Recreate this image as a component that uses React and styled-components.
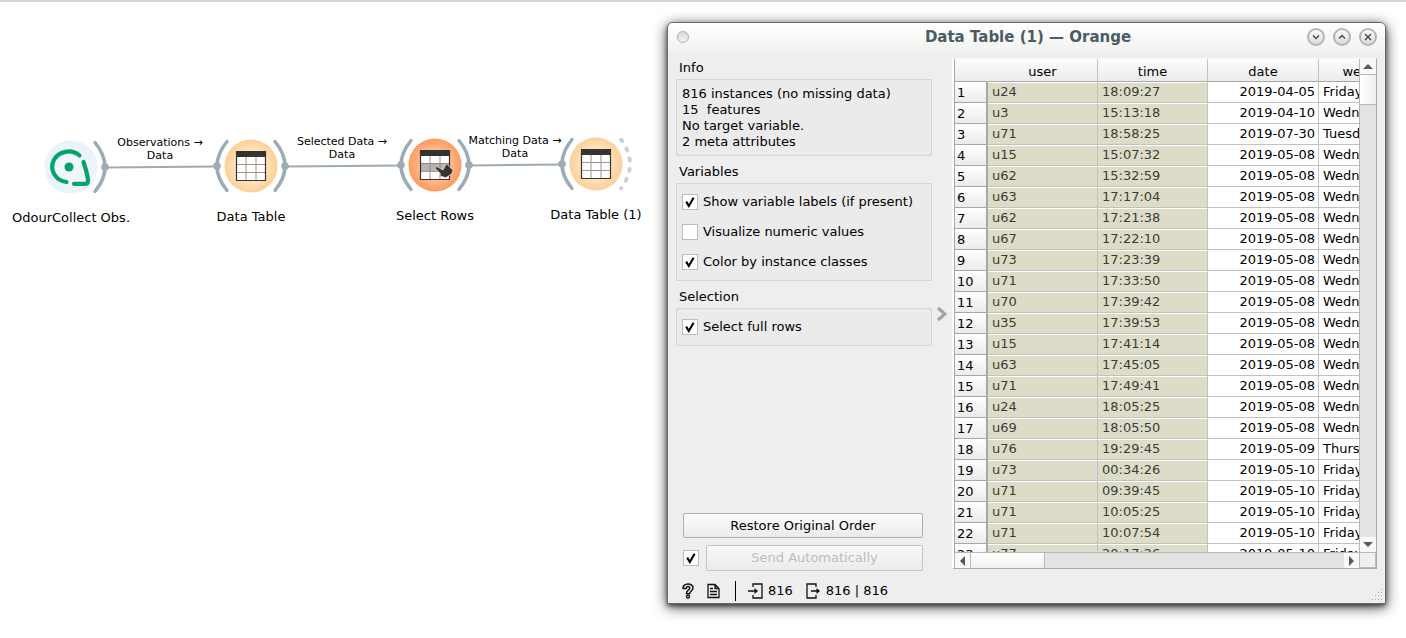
import React from 'react';
import styled, { createGlobalStyle } from 'styled-components';

const Global = createGlobalStyle`
  * { box-sizing: border-box; }
  body { margin: 0; background: #fff; }
  body, button, input, table { font: 13px/16px "DejaVu Sans", sans-serif; color: #000; }
`;

const Page = styled.main`
  display: flex;
  min-height: 100vh;
  height: 100vh;
  border-top: 2px solid #d4d4d4;
  overflow: hidden;
`;

/* ---------- workflow canvas ---------- */
const Canvas = styled.section`
  position: relative;
  flex: 1 1 0;
  min-width: 0;
`;
const Links = styled.svg`
  position: absolute;
  left: 0;
  top: 0;
  width: 660px;
  height: 240px;
`;
const Node = styled.div`
  position: absolute;
  left: ${p => p.$x - 80}px;
  top: ${p => p.$y - 30}px;
  width: 160px;
  display: flex;
  flex-direction: column;
  align-items: center;
  gap: 13px;
`;
const NodeIcon = styled.svg`
  width: 80px;
  height: 60px;
  overflow: visible;
`;
const LinkLabel = styled.div`
  position: absolute;
  left: ${p => p.$x - 60}px;
  top: ${p => p.$y}px;
  width: 120px;
  font-size: 11px;
  line-height: 13px;
  text-align: center;
`;

/* ---------- window ---------- */
const Window = styled.section`
  flex: 0 1 719px;
  min-width: 0;
  display: flex;
  flex-direction: column;
  margin: 20px 20px 34px 0;
  border: 1px solid #6a6a6a;
  border-radius: 6px 6px 0 0;
  background: #eee;
  box-shadow: 0 3px 14px rgba(0, 0, 0, 0.75), 0 2px 4px rgba(0, 0, 0, 0.5);
`;
const TitleBar = styled.header`
  display: flex;
  align-items: center;
  height: 28px;
  padding: 0 8px 0 9px;
  border-radius: 5px 5px 0 0;
  background: linear-gradient(#fff, #f3f2f1);
`;
const Title = styled.h1`
  flex: 1;
  margin: 0;
  padding-left: 60px;
  font-size: 15px;
  line-height: 20px;
  text-align: center;
  color: #4a5c66;
`;
const MenuDot = styled.button`
  width: 12px;
  height: 12px;
  padding: 0;
  border: 1px solid #b0b0b0;
  border-radius: 50%;
  background: linear-gradient(#d8d8d8, #f2f2f2);
`;
const WindowButtons = styled.div`
  display: flex;
  gap: 8px;
`;
const RoundButton = styled.button`
  display: grid;
  place-items: center;
  width: 18px;
  height: 18px;
  padding: 0;
  border: 2px solid #b4b4b4;
  border-radius: 50%;
  background: linear-gradient(#fafafa, #dcdcdc);
`;
const Body = styled.div`
  flex: 1;
  min-height: 0;
  display: flex;
  padding: 6px 8px 0;
`;
const Sidebar = styled.aside`
  flex: 0 0 256px;
  display: flex;
  flex-direction: column;
`;
const GroupTitle = styled.h2`
  margin: 0;
  padding: 3px;
  font-size: 13px;
  line-height: 16px;
  font-weight: 400;
`;
const Group = styled.div`
  margin-bottom: 5px;
  padding: ${p => p.$pad};
  border: 1px solid #d2d2d2;
  border-radius: 2px;
  background: #ebebeb;
`;
const InfoLine = styled.p`
  margin: 0;
  white-space: pre;
`;
const CheckLabel = styled.label`
  display: flex;
  align-items: center;
  gap: 5px;
  height: 30px;
`;
const Check = styled.input`
  appearance: none;
  flex: none;
  width: 16px;
  height: 16px;
  margin: 0;
  border: 1px solid #bcbcbc;
  background: #fff;
  &:checked {
    background: #fff url("data:image/svg+xml,%3Csvg xmlns='http://www.w3.org/2000/svg' viewBox='0 0 14 14'%3E%3Cpath d='M3.2 6.6 5.8 11 10.6 2.8' fill='none' stroke='%23000' stroke-width='2.1'/%3E%3C/svg%3E") center / 14px 14px no-repeat;
  }
`;
const Actions = styled.div`
  display: grid;
  grid-template-columns: 16px 1fr;
  gap: 7px;
  align-items: center;
  margin-top: auto;
  padding: 0 9px 0 7px;
`;
const Button = styled.button`
  grid-column: ${p => (p.$wide ? '1 / -1' : 'auto')};
  height: ${p => (p.$wide ? 25 : 26)}px;
  padding: 0;
  border: 1px solid #aeaeae;
  border-radius: 2px;
  background: linear-gradient(#fdfdfd, #ebebeb);
  &:disabled { color: #bdbdbd; border-color: #c4c4c4; background: linear-gradient(#f8f8f8, #ebebeb); }
`;
const Splitter = styled.button`
  flex: 0 0 20px;
  display: grid;
  place-items: center;
  padding: 0;
  border: 0;
  background: none;
`;

/* ---------- table ---------- */
const Frame = styled.div`
  flex: 1;
  min-width: 0;
  margin: 1px 0 2px;
  display: grid;
  grid-template-columns: minmax(0, 1fr) 17px;
  grid-template-rows: minmax(0, 1fr) 16px;
  border: 1px solid #a8a8a8;
  border-top-color: #f8f8f8;
  border-left: 2px solid #fff;
  background: #fff;
`;
const Viewport = styled.div`
  min-width: 0;
  min-height: 0;
  overflow: hidden;
  border-left: 1px solid #a8a8a8;
`;
const Grid = styled.table`
  width: 474px;
  table-layout: fixed;
  border-collapse: separate;
  border-spacing: 0;
`;
const Col = styled.col`
  width: ${p => p.$w}px;
`;
const HeadCell = styled.th`
  height: 23px;
  padding: 4px 0 1px;
  border-right: 1px solid #c2c2c2;
  border-bottom: 1px solid #a8a8a8;
  background: linear-gradient(#fdfdfd, #ebebeb);
  font-weight: 400;
  line-height: 16px;
  &:first-child { border-right-color: transparent; }
`;
const RowHead = styled.th`
  height: 21px;
  padding: 1px 0 0 2px;
  border-right: 2px solid #a8a8a8;
  border-bottom: 1px solid #a8a8a8;
  background: linear-gradient(#fff, #ebebeb);
  font-weight: 400;
  line-height: 16px;
  text-align: left;
`;
const Cell = styled.td`
  height: 21px;
  padding: 0 3px 0 4px;
  border-right: 1px solid #c2c2c2;
  border-bottom: 1px solid #c2c2c2;
  background: ${p => (p.$meta ? '#dcdcc8' : '#fff')};
  box-shadow: inset 0 1px #fff;
  color: ${p => (p.$meta ? '#3c3c36' : '#000')};
  line-height: 16px;
  text-align: ${p => (p.$right ? 'right' : 'left')};
  white-space: nowrap;
`;
const ScrollBar = styled.div`
  display: flex;
  flex-direction: ${p => (p.$vertical ? 'column' : 'row')};
  background: #e4e4e4;
  border: 0 solid #b8b8b8;
  border-width: ${p => (p.$vertical ? '0 0 0 1px' : '1px 0 0 1px')};
`;
const ScrollButton = styled.button`
  display: grid;
  place-items: center;
  flex: 0 0 15px;
  padding: 0;
  border: 0;
  background: #f8f8f8;
`;
const Thumb = styled.div`
  flex: 0 0 ${p => p.$size}px;
  border: 1px solid #b8b8b8;
  border-width: ${p => (p.$vertical ? '1px 0' : '0 1px')};
  background: linear-gradient(${p => (p.$vertical ? 'to right' : 'to bottom')}, #fff, #f0f0f0);
`;
const Track = styled.div`
  flex: 1;
`;
const Corner = styled.div`
  border: 1px solid #b8b8b8;
  background: #f0f0f0;
`;

/* ---------- status bar ---------- */
const StatusBar = styled.footer`
  display: flex;
  align-items: center;
  height: 32px;
  padding: 8px 2px 0 12px;
`;
const IconButton = styled.button`
  display: grid;
  place-items: center;
  width: 25px;
  height: 20px;
  padding: 0 9px 0 0;
  border: 0;
  background: none;
`;
const Divider = styled.span`
  width: 1px;
  height: 20px;
  margin: 0 12px 0 5px;
  background: #000;
`;
const Count = styled.span`
  display: flex;
  align-items: center;
  gap: 5px;
  margin-right: 13px;
`;
const Grip = styled.svg`
  align-self: flex-end;
  margin: 0 0 2px auto;
`;

const rows = [
  ['u24', '18:09:27', '2019-04-05', 'Friday'],
  ['u3', '15:13:18', '2019-04-10', 'Wednesday'],
  ['u71', '18:58:25', '2019-07-30', 'Tuesday'],
  ['u15', '15:07:32', '2019-05-08', 'Wednesday'],
  ['u62', '15:32:59', '2019-05-08', 'Wednesday'],
  ['u63', '17:17:04', '2019-05-08', 'Wednesday'],
  ['u62', '17:21:38', '2019-05-08', 'Wednesday'],
  ['u67', '17:22:10', '2019-05-08', 'Wednesday'],
  ['u73', '17:23:39', '2019-05-08', 'Wednesday'],
  ['u71', '17:33:50', '2019-05-08', 'Wednesday'],
  ['u70', '17:39:42', '2019-05-08', 'Wednesday'],
  ['u35', '17:39:53', '2019-05-08', 'Wednesday'],
  ['u15', '17:41:14', '2019-05-08', 'Wednesday'],
  ['u63', '17:45:05', '2019-05-08', 'Wednesday'],
  ['u71', '17:49:41', '2019-05-08', 'Wednesday'],
  ['u24', '18:05:25', '2019-05-08', 'Wednesday'],
  ['u69', '18:05:50', '2019-05-08', 'Wednesday'],
  ['u76', '19:29:45', '2019-05-09', 'Thursday'],
  ['u73', '00:34:26', '2019-05-10', 'Friday'],
  ['u71', '09:39:45', '2019-05-10', 'Friday'],
  ['u71', '10:05:25', '2019-05-10', 'Friday'],
  ['u71', '10:07:54', '2019-05-10', 'Friday'],
  ['u77', '20:17:26', '2019-05-10', 'Friday'],
];

const nodes = [
  { x: 71, y: 165, label: 'OdourCollect Obs.', kind: 'odour', fill: 'blue', right: true },
  { x: 251, y: 164, label: 'Data Table', kind: 'table', fill: 'peach', left: true, right: true },
  { x: 435, y: 163, label: 'Select Rows', kind: 'select', fill: 'orange', left: true, right: true },
  { x: 596, y: 162, label: 'Data Table (1)', kind: 'table', fill: 'peach', left: true, dashed: true },
];

function TableGlyph({ selected }) {
  return (
    <g>
      <rect x="-14.5" y="-14.5" width="29" height="29" fill="#fff" stroke="#333" />
      {selected && <rect x="-14" y="-2" width="28" height="8" fill="#b4b4b4" />}
      <path d="M-5 -9V14M5 -9V14M-14 -1.5H14M-14 6.5H14" stroke="#8b7b72" strokeWidth="1" opacity=".8" />
      <rect x="-15" y="-15" width="30" height="6" fill="#333" />
      <path d="M-14.5 -14.5V14.5H14.5V-14.5" fill="none" stroke="#3a3330" strokeWidth="1.2" />
      {selected && (
        <path
          d="M.5 2.5C1.5 1 3 2 4 2.8L8 5L11 -.5C12 -1.8 13 -.5 13.5 .8L17.5 4.8C18.5 6 17 8 16.5 9L11.5 12.3C10 13 8 11.5 6 11.3C5 11 5 9.5 5.3 8.5L1.5 4.5C.5 3.8 0 3.2 .5 2.5Z"
          fill="#333" stroke="#f4d9ca" strokeWidth=".8"
        />
      )}
    </g>
  );
}

function OdourGlyph() {
  return (
    <g fill="none" stroke="#04a36c" strokeWidth="4.2" strokeLinecap="round">
      <path d="M8.500 -11.500A16.300 15.300 0 1 0 -4.500 15" />
      <path d="M12.500 -5C14.500 1 16.500 8 17 13C17.300 15.800 16.500 16.800 14 16.800H3" />
      <circle cx="-2" cy="0" r="4.500" fill="#04a36c" stroke="none" />
    </g>
  );
}

function WorkflowNode({ x, y, label, kind, fill, left, right, dashed }) {
  return (
    <Node $x={x} $y={y}>
      <NodeIcon viewBox="-40 -30 80 60" aria-hidden="true">
        <circle r="26.500" fill={`url(#${fill})`} />
        {kind === 'odour' ? <OdourGlyph /> : <TableGlyph selected={kind === 'select'} />}
        <g fill="none" stroke="#9cacb4" strokeWidth="3.500" strokeLinecap="round">
          {left && <path d="M-24 -24.500Q-44 0 -24 24.500" />}
          {right && <path d="M24 -24.500Q44 0 24 24.500" />}
          {dashed && <path d="M25 -24.500Q43 0 25 24.500" stroke="#c9d2d7" strokeWidth="4" strokeDasharray="2 8.500" />}
        </g>
        {left && <circle cx="-34" r="3.800" fill="#9cacb4" />}
        {right && <circle cx="34" r="3.800" fill="#9cacb4" />}
      </NodeIcon>
      <span>{label}</span>
    </Node>
  );
}

function Arrow({ dir }) {
  const d = { up: 'M0 6 5 1 10 6Z', down: 'M0 1H10L5 6Z', left: 'M6 0V10L1 5Z', right: 'M1 0V10L6 5Z' }[dir];
  const tall = dir === 'left' || dir === 'right';
  return (
    <svg width={tall ? 7 : 10} height={tall ? 10 : 7} aria-hidden="true">
      <path d={d} fill="#585858" />
    </svg>
  );
}

function RoundIcon({ d }) {
  return (
    <svg width="10" height="10" fill="none" stroke="#444" strokeWidth="1.4" aria-hidden="true">
      <path d={d} />
    </svg>
  );
}

export default function App() {
  return (
    <>
      <Global />
      <Page>
        <Canvas>
          <Links viewBox="0 0 660 240" aria-hidden="true">
            <defs>
              <radialGradient id="blue"><stop offset="0" stopColor="#f3f8fc" /><stop offset="1" stopColor="#eaf3fa" /></radialGradient>
              <radialGradient id="peach"><stop offset="0" stopColor="#fff0dc" /><stop offset=".5" stopColor="#ffe5c4" /><stop offset="1" stopColor="#ffcf96" /></radialGradient>
              <radialGradient id="orange"><stop offset="0" stopColor="#ffd9c0" /><stop offset=".5" stopColor="#ffc09a" /><stop offset="1" stopColor="#ff9a5c" /></radialGradient>
            </defs>
            <path d="M105 165.500 217 164.500M285 164.500 401 163.500M469 163.500 562 162.500" stroke="#9cacb4" strokeWidth="2" />
          </Links>
          {nodes.map(n => <WorkflowNode key={n.label} {...n} />)}
          <LinkLabel $x={160} $y={134}>Observations →<br />Data</LinkLabel>
          <LinkLabel $x={342} $y={133}>Selected Data →<br />Data</LinkLabel>
          <LinkLabel $x={515} $y={132}>Matching Data →<br />Data</LinkLabel>
        </Canvas>

        <Window>
          <TitleBar>
            <MenuDot aria-label="Window menu" />
            <Title>Data Table (1) — Orange</Title>
            <WindowButtons>
              <RoundButton aria-label="Minimize"><RoundIcon d="M2 3.500 5 6.500 8 3.500" /></RoundButton>
              <RoundButton aria-label="Maximize"><RoundIcon d="M2 6.500 5 3.500 8 6.500" /></RoundButton>
              <RoundButton aria-label="Close"><RoundIcon d="M2 2 8 8M8 2 2 8" /></RoundButton>
            </WindowButtons>
          </TitleBar>

          <Body>
            <Sidebar>
              <GroupTitle>Info</GroupTitle>
              <Group $pad="6px 5px 5px">
                <InfoLine>816 instances (no missing data)</InfoLine>
                <InfoLine>15  features</InfoLine>
                <InfoLine>No target variable.</InfoLine>
                <InfoLine>2 meta attributes</InfoLine>
              </Group>
              <GroupTitle>Variables</GroupTitle>
              <Group $pad="3px 5px">
                <CheckLabel><Check type="checkbox" defaultChecked />Show variable labels (if present)</CheckLabel>
                <CheckLabel><Check type="checkbox" />Visualize numeric values</CheckLabel>
                <CheckLabel><Check type="checkbox" defaultChecked />Color by instance classes</CheckLabel>
              </Group>
              <GroupTitle>Selection</GroupTitle>
              <Group $pad="3px 5px">
                <CheckLabel><Check type="checkbox" defaultChecked />Select full rows</CheckLabel>
              </Group>
              <Actions>
                <Button $wide>Restore Original Order</Button>
                <Check type="checkbox" defaultChecked aria-label="Send Automatically" />
                <Button disabled>Send Automatically</Button>
              </Actions>
            </Sidebar>

            <Splitter aria-label="Toggle sidebar">
              <svg width="12" height="16" fill="none" stroke="#a2a2a2" strokeWidth="3" aria-hidden="true">
                <path d="M2 2 9 8 2 14" />
              </svg>
            </Splitter>

            <Frame>
              <Viewport>
                <Grid>
                  <colgroup>
                    <Col $w={33} /><Col $w={110} /><Col $w={110} /><Col $w={111} /><Col $w={110} />
                  </colgroup>
                  <thead>
                    <tr>
                      <HeadCell aria-label="Row" />
                      <HeadCell>user</HeadCell>
                      <HeadCell>time</HeadCell>
                      <HeadCell>date</HeadCell>
                      <HeadCell>week day</HeadCell>
                    </tr>
                  </thead>
                  <tbody>
                    {rows.map(([user, time, date, day], i) => (
                      <tr key={i}>
                        <RowHead scope="row">{i + 1}</RowHead>
                        <Cell $meta>{user}</Cell>
                        <Cell $meta>{time}</Cell>
                        <Cell $right>{date}</Cell>
                        <Cell>{day}</Cell>
                      </tr>
                    ))}
                  </tbody>
                </Grid>
              </Viewport>
              <ScrollBar $vertical>
                <ScrollButton aria-label="Scroll up"><Arrow dir="up" /></ScrollButton>
                <Thumb $vertical $size={31} />
                <Track />
                <ScrollButton aria-label="Scroll down"><Arrow dir="down" /></ScrollButton>
              </ScrollBar>
              <ScrollBar>
                <ScrollButton aria-label="Scroll left"><Arrow dir="left" /></ScrollButton>
                <Thumb $size={75} />
                <Track />
                <ScrollButton aria-label="Scroll right"><Arrow dir="right" /></ScrollButton>
              </ScrollBar>
              <Corner />
            </Frame>
          </Body>

          <StatusBar>
            <IconButton aria-label="Help">
              <svg width="12" height="16" fill="none" aria-hidden="true">
                <path d="M1 5.500C1 -.5 11 -.5 11 5C11 8 7.600 8 7.600 10.800H4.400C4.400 7 7.800 7 7.800 5C7.800 3 4.200 3 4.200 5.500Z" fill="#eee" stroke="#111" strokeWidth="1.500" strokeLinejoin="round" />
                <circle cx="6" cy="13.600" r="1.500" stroke="#111" strokeWidth="1.400" />
              </svg>
            </IconButton>
            <IconButton aria-label="Report">
              <svg width="13" height="16" fill="none" stroke="#111" strokeWidth="1.300" aria-hidden="true">
                <path d="M1 1.500H8L12 5.500V14.500H1ZM8 1.500V5.500H12M3 5.500H6M3 8.500H10M3 11.500H10" />
              </svg>
            </IconButton>
            <Divider />
            <Count>
              <svg width="15" height="16" fill="none" stroke="#111" strokeWidth="1.300" aria-hidden="true">
                <path d="M5 4V1H14V15H5V12M0 8H8" /><path d="M6.500 5 10 8 6.500 11Z" fill="#111" stroke="none" />
              </svg>
              816
            </Count>
            <Count>
              <svg width="15" height="16" fill="none" stroke="#111" strokeWidth="1.300" aria-hidden="true">
                <path d="M10 4V1H1V15H10V12M5 8H13" /><path d="M10.500 5 14 8 10.500 11Z" fill="#111" stroke="none" />
              </svg>
              816 | 816
            </Count>
            <Grip width="12" height="12" fill="#a8a8a8" aria-hidden="true">
              <path d="M10 0h1v1h-1zM7 3h1v1h-1zM10 3h1v1h-1zM4 6h1v1h-1zM7 6h1v1h-1zM10 6h1v1h-1zM1 10h1v1h-1zM4 10h1v1h-1zM7 10h1v1h-1zM10 10h1v1h-1z" />
            </Grip>
          </StatusBar>
        </Window>
      </Page>
    </>
  );
}
